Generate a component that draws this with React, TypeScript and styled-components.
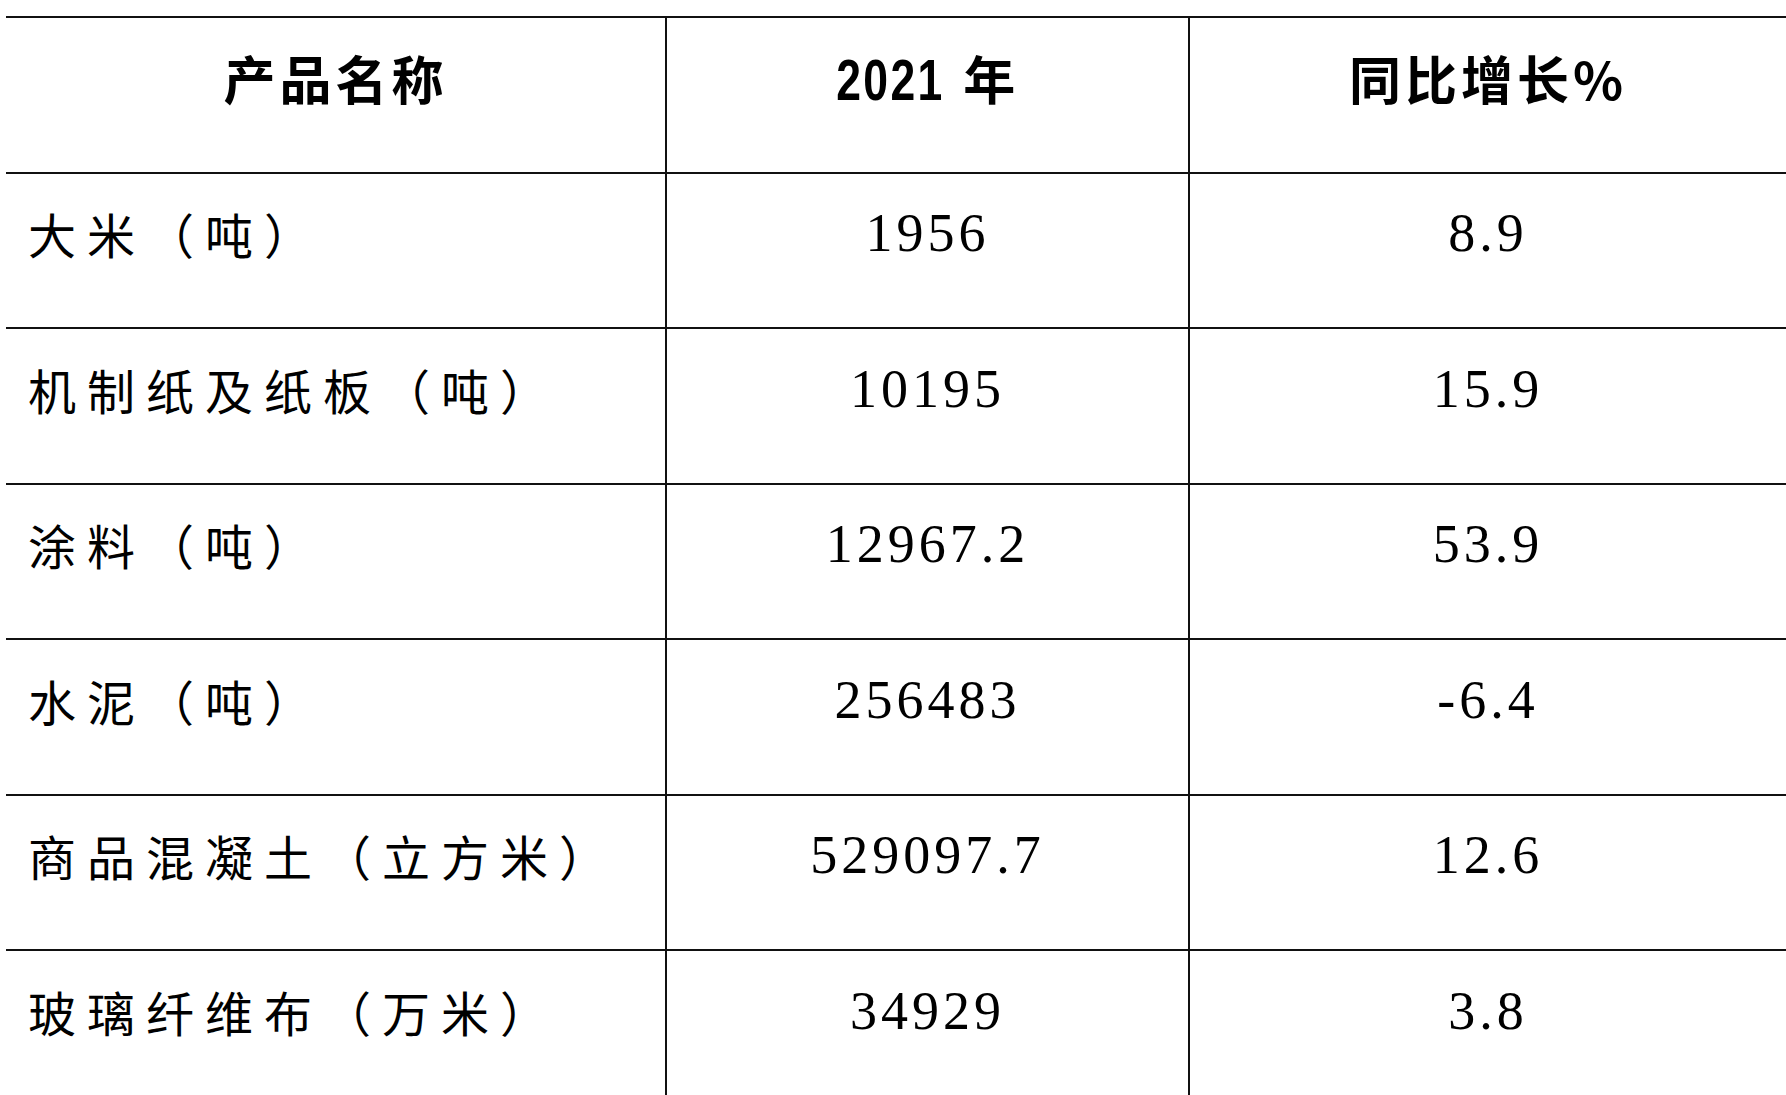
import React from "react";
import styled, { createGlobalStyle } from "styled-components";

const GlobalStyle = createGlobalStyle`
  html, body {
    margin: 0;
    padding: 0;
    background: #ffffff;
  }
  body {
    font-family: "Noto Sans CJK SC", "Liberation Serif", serif;
    color: #000000;
    overflow: hidden;
  }
`;

const Page = styled.div`
  width: 1786px;
  height: 1095px;
  padding: 16px 0 0 6px;
  box-sizing: border-box;
  overflow: hidden;
`;

const Table = styled.div`
  display: grid;
  grid-template-columns: 661px 523px 596px;
  grid-auto-rows: 155.5px;
  border-top: 2px solid #111;
  width: 1780px;
`;

const Cell = styled.div<{ $align: "left" | "center"; $last?: boolean }>`
  display: flex;
  align-items: center;
  justify-content: ${(p) => (p.$align === "left" ? "flex-start" : "center")};
  padding: 0 0 34px ${(p) => (p.$align === "left" ? "22px" : "0")};
  box-sizing: border-box;
  border-bottom: 2px solid #111;
  border-right: ${(p) => (p.$last ? "none" : "2px solid #111")};
  white-space: nowrap;
`;

const HeadText = styled.span`
  font-family: "Noto Sans CJK SC", sans-serif;
  font-weight: 700;
  font-size: 52px;
  letter-spacing: 4px;
`;

const HeadYear = styled.span`
  display: inline-block;
  font-family: "Liberation Sans", "Noto Sans CJK SC", sans-serif;
  font-weight: 700;
  font-size: 57px;
  letter-spacing: 3px;
  transform: scaleX(0.78);
  margin: 0 -12px 0 -15px;
`;

const NameText = styled.span`
  font-family: "Noto Sans CJK SC", sans-serif;
  font-weight: 400;
  font-size: 48px;
  letter-spacing: 11px;
`;

const NumText = styled.span`
  font-family: "Liberation Serif", serif;
  font-size: 54px;
  letter-spacing: 4px;
`;

const rows = [
  { name: "大米（吨）", value: "1956", growth: "8.9" },
  { name: "机制纸及纸板（吨）", value: "10195", growth: "15.9" },
  { name: "涂料（吨）", value: "12967.2", growth: "53.9" },
  { name: "水泥（吨）", value: "256483", growth: "-6.4" },
  { name: "商品混凝土（立方米）", value: "529097.7", growth: "12.6" },
  { name: "玻璃纤维布（万米）", value: "34929", growth: "3.8" },
];

export default function App() {
  return (
    <>
      <GlobalStyle />
      <Page>
        <Table>
          <Cell $align="center">
            <HeadText>产品名称</HeadText>
          </Cell>
          <Cell $align="center">
            <HeadText>
              <HeadYear>2021</HeadYear> 年
            </HeadText>
          </Cell>
          <Cell $align="center" $last>
            <HeadText>同比增长%</HeadText>
          </Cell>
          {rows.map((r) => (
            <React.Fragment key={r.name}>
              <Cell $align="left">
                <NameText>{r.name}</NameText>
              </Cell>
              <Cell $align="center">
                <NumText>{r.value}</NumText>
              </Cell>
              <Cell $align="center" $last>
                <NumText>{r.growth}</NumText>
              </Cell>
            </React.Fragment>
          ))}
        </Table>
      </Page>
    </>
  );
}
